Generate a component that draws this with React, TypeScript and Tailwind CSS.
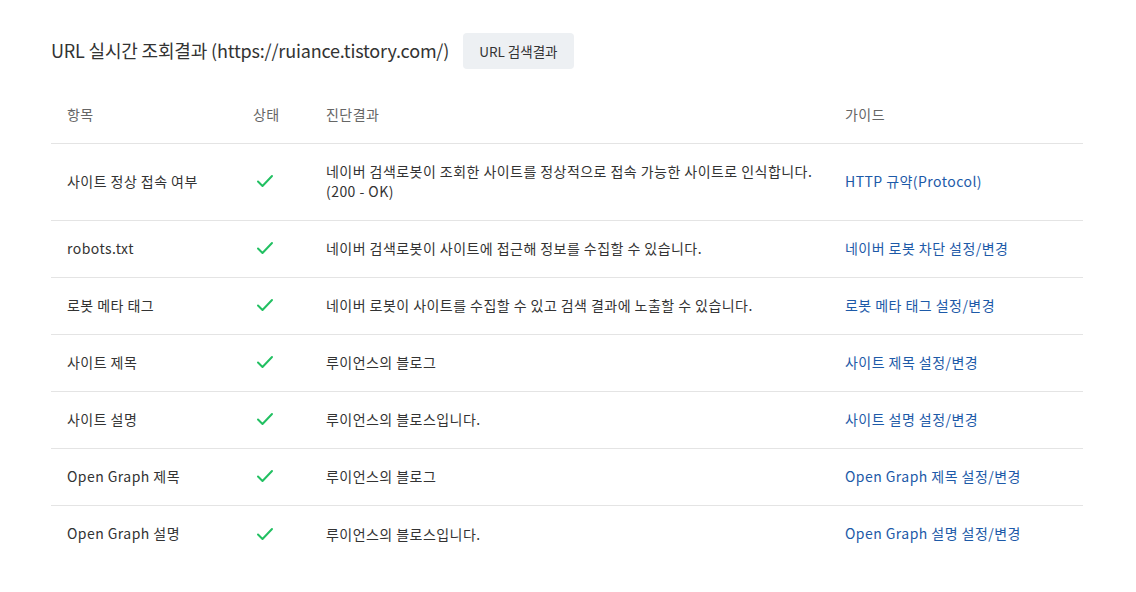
import React from "react";

type Row = {
  name: string;
  result: React.ReactNode;
  guide: string;
};

const rows: Row[] = [
  {
    name: "사이트 정상 접속 여부",
    result: (
      <>
        네이버 검색로봇이 조회한 사이트를 정상적으로 접속 가능한 사이트로 인식합니다.
        <br />
        (200 - OK)
      </>
    ),
    guide: "HTTP 규약(Protocol)",
  },
  {
    name: "robots.txt",
    result: "네이버 검색로봇이 사이트에 접근해 정보를 수집할 수 있습니다.",
    guide: "네이버 로봇 차단 설정/변경",
  },
  {
    name: "로봇 메타 태그",
    result: "네이버 로봇이 사이트를 수집할 수 있고 검색 결과에 노출할 수 있습니다.",
    guide: "로봇 메타 태그 설정/변경",
  },
  { name: "사이트 제목", result: "루이언스의 블로그", guide: "사이트 제목 설정/변경" },
  { name: "사이트 설명", result: "루이언스의 블로스입니다.", guide: "사이트 설명 설정/변경" },
  { name: "Open Graph 제목", result: "루이언스의 블로그", guide: "Open Graph 제목 설정/변경" },
  { name: "Open Graph 설명", result: "루이언스의 블로스입니다.", guide: "Open Graph 설명 설정/변경" },
];

function Check() {
  return (
    <svg width="18" height="14" viewBox="0 0 18 14" fill="none" className="ml-[3px]">
      <path
        d="M2 7.5 L6.5 12 L16 2"
        stroke="#22c062"
        strokeWidth="2"
        strokeLinecap="round"
        strokeLinejoin="round"
      />
    </svg>
  );
}

export default function App() {
  return (
    <div
      className="min-h-screen w-full bg-white pl-[51px] pr-[53px] pt-[33px] text-[#333]"
      style={{ fontFamily: '"Noto Sans CJK KR", "Noto Sans", sans-serif' }}
    >
      {/* Title */}
      <div className="flex items-center gap-[14px]">
        <h1 className="text-[18px] font-normal text-[#333] tracking-[-0.17px] pb-[2px]">
          URL 실시간 조회결과 (https://ruiance.tistory.com/)
        </h1>
        <button className="h-9 px-[16px] rounded bg-[#edf0f3] text-[13.5px] text-[#333]">
          URL 검색결과
        </button>
      </div>

      {/* Table */}
      <div className="mt-[22px] text-[14px] tracking-[0.45px]">
        <div className="grid grid-cols-[202px_73px_519px_1fr] h-[53px] pb-[5px] items-center text-[#666] border-b border-[#e4e4e4]">
          <div className="pl-4">항목</div>
          <div>상태</div>
          <div>진단결과</div>
          <div>가이드</div>
        </div>
        {rows.map((r, i) => (
          <div
            key={r.name}
            className={`grid grid-cols-[202px_73px_519px_1fr] items-center pb-[2px] ${
              i === 0 ? "h-[77px]" : "h-[57px]"
            } ${i < rows.length - 1 ? "border-b border-[#e4e4e4]" : ""}`}
          >
            <div className="pl-4">{r.name}</div>
            <div>
              <Check />
            </div>
            <div className="leading-5">{r.result}</div>
            <div className="text-[#1d5aa8]">{r.guide}</div>
          </div>
        ))}
      </div>
    </div>
  );
}
